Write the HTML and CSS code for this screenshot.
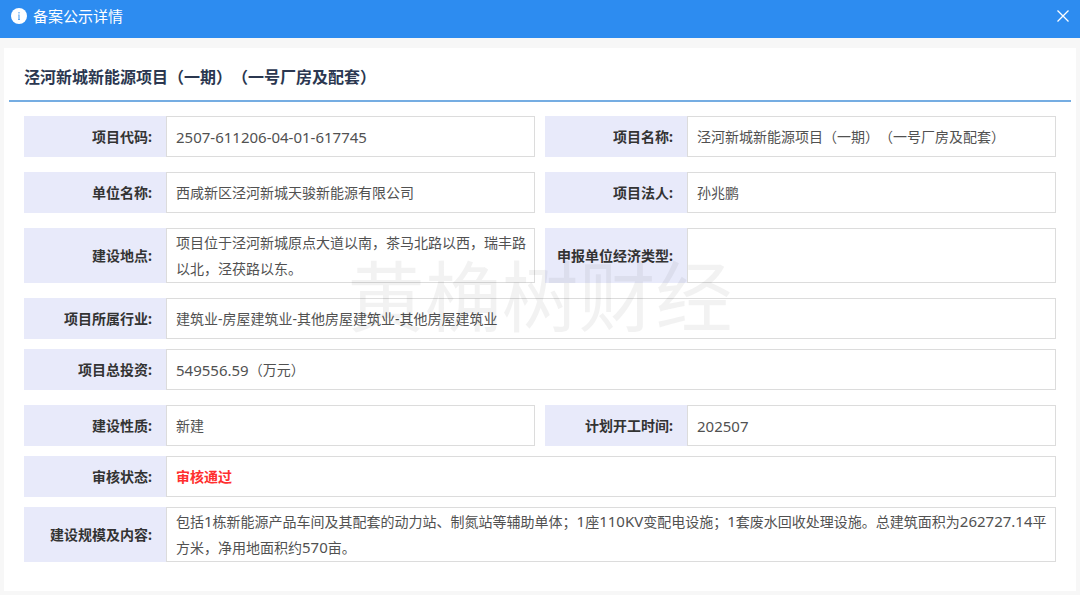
FILE: index.html
```html
<!DOCTYPE html>
<html lang="zh-CN">
<head>
  <meta charset="utf-8">
  <title>备案公示详情</title>
  <link rel="stylesheet" href="styles.css">
</head>
<body>
  <header class="topbar">
    <svg class="info-icon" viewBox="0 0 16 16">
      <circle cx="8" cy="8" r="8" fill="#fff"/>
      <path d="M8 4v1.4M7.2 7H8v4.2M7 11.5h2" fill="none" stroke="#5ea8f3" stroke-width="1.2"/>
    </svg>
    <h1 class="topbar-title">备案公示详情</h1>
    <button class="close" type="button" aria-label="关闭">
      <svg viewBox="0 0 12 12" width="12" height="12">
        <path d="M.5.5l11 11M11.5.5l-11 11" fill="none" stroke="#fff" stroke-width="1.3"/>
      </svg>
    </button>
  </header>

  <main class="card">
    <h2 class="project-title">泾河新城新能源项目（一期）（一号厂房及配套）</h2>

    <dl class="details">
      <div class="field half">
        <dt>项目代码:</dt>
        <dd><span class="num">2507-611206-04-01-617745</span></dd>
      </div>
      <div class="field half">
        <dt>项目名称:</dt>
        <dd>泾河新城新能源项目（一期）（一号厂房及配套）</dd>
      </div>

      <div class="field half">
        <dt>单位名称:</dt>
        <dd>西咸新区泾河新城天骏新能源有限公司</dd>
      </div>
      <div class="field half">
        <dt>项目法人:</dt>
        <dd>孙兆鹏</dd>
      </div>

      <div class="field half tall">
        <dt>建设地点:</dt>
        <dd>项目位于泾河新城原点大道以南，茶马北路以西，瑞丰路以北，泾茯路以东。</dd>
      </div>
      <div class="field half tall">
        <dt>申报单位经济类型:</dt>
        <dd></dd>
      </div>

      <div class="field tight">
        <dt>项目所属行业:</dt>
        <dd>建筑业-房屋建筑业-其他房屋建筑业-其他房屋建筑业</dd>
      </div>
      <div class="field">
        <dt>项目总投资:</dt>
        <dd><span class="num">549556.59</span>（万元）</dd>
      </div>

      <div class="field half tight">
        <dt>建设性质:</dt>
        <dd>新建</dd>
      </div>
      <div class="field half tight">
        <dt>计划开工时间:</dt>
        <dd><span class="num">202507</span></dd>
      </div>

      <div class="field tight">
        <dt>审核状态:</dt>
        <dd class="passed">审核通过</dd>
      </div>
      <div class="field tall tight">
        <dt>建设规模及内容:</dt>
        <dd><p>包括<span class="num">1</span>栋新能源产品车间及其配套的动力站、制氮站等辅助单体；<span class="num">1</span>座<span class="num">110KV</span>变配电设施；<span class="num">1</span>套废水回收处理设施。总建筑面积为<span class="num">262727.14</span>平<br>方米，净用地面积约<span class="num">570</span>亩。</p></dd>
      </div>
    </dl>

    <div class="watermark">黄桷树财经</div>
  </main>
</body>
</html>
```
FILE: styles.css
```css
* {
  box-sizing: border-box;
}

body {
  margin: 0;
  background: #f7f7f7;
  color: #515151;
  font-family: "Noto Sans", "Noto Sans CJK SC", sans-serif;
  font-size: 14px;
  text-spacing-trim: space-all;
}

.topbar {
  display: flex;
  align-items: center;
  height: 38px;
  padding: 0 11px 7px;
  background: #2d8cf0;
  color: #fff;
}

.info-icon {
  width: 16px;
  height: 16px;
  margin-right: 6px;
}

.topbar-title {
  margin: 0;
  font-size: 15px;
  font-weight: 400;
  line-height: 24px;
}

.close {
  display: flex;
  margin-left: auto;
  padding: 0;
  border: 0;
  background: none;
  cursor: pointer;
}

.card {
  position: relative;
  margin: 10px 4px 4px;
  padding: 0 5px 19px;
  background: #fff;
}

.project-title {
  margin: 0;
  padding: 16px 15px 10px;
  border-bottom: 2px solid #75ade2;
  color: #2b3750;
  font-size: 16px;
  font-weight: 700;
  line-height: 26px;
}

.details {
  display: grid;
  grid-template-columns: 1fr 1fr;
  column-gap: 10px;
  margin: 0;
  padding: 14px 15px 0;
}

.field {
  display: flex;
  grid-column: span 2;
  min-height: 41px;
  margin-bottom: 15px;
}

.half {
  grid-column: span 1;
}

.tall {
  min-height: 55px;
}

.tight {
  margin-bottom: 10px;
}

dt {
  display: flex;
  flex: 0 0 142px;
  align-items: center;
  justify-content: flex-end;
  padding-right: 14px;
  background: #e8eafa;
  color: #333;
  font-weight: 700;
  line-height: 26px;
}

dd {
  display: flex;
  flex: 1;
  align-items: center;
  margin: 0;
  padding-left: 9px;
  border: 1px solid #dcdcdc;
  line-height: 26px;
}

dd p {
  margin: 0;
}

.num {
  font-size: 15px;
  line-height: 20px;
}

.passed {
  color: #ff2f2f;
  font-weight: 700;
}

/* sits over the whole table */
.watermark {
  position: absolute;
  top: 197px;
  left: 0;
  width: 100%;
  color: rgba(0, 0, 0, 0.05);
  font-size: 77px;
  font-weight: 400;
  line-height: 104px;
  text-align: center;
  pointer-events: none;
}
```
